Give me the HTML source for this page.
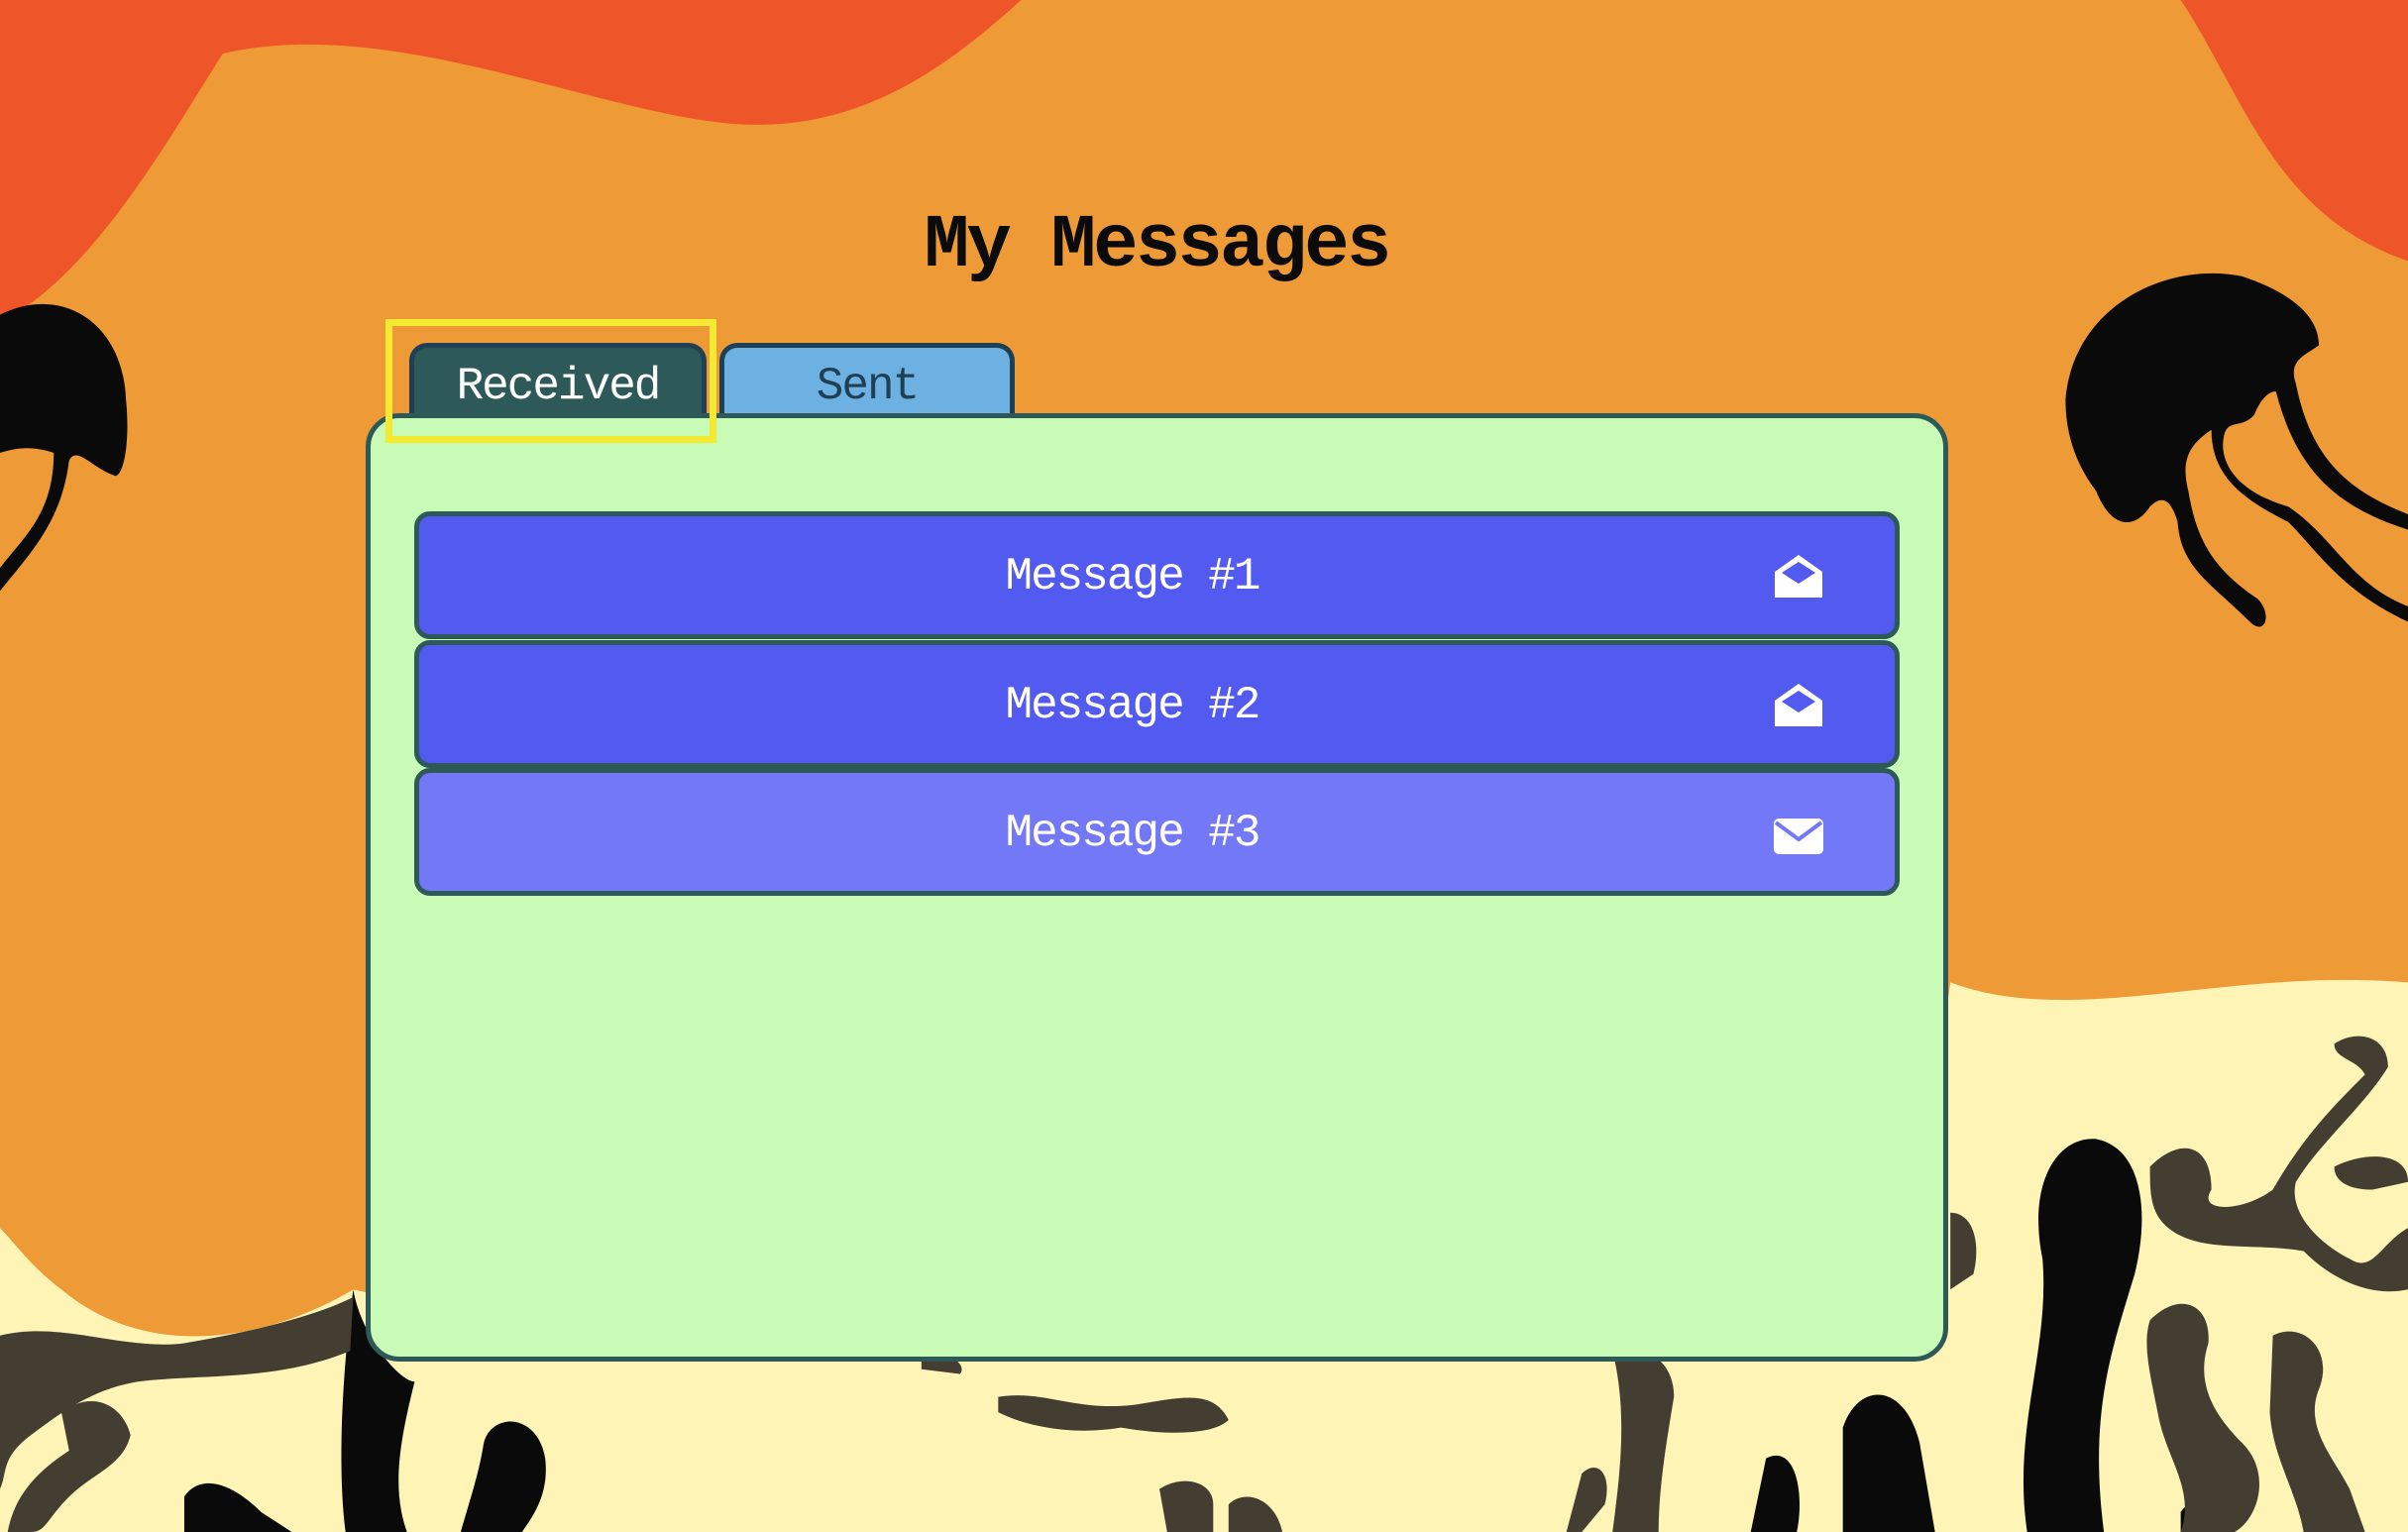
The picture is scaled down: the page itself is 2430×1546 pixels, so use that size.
<!DOCTYPE html>
<html><head><meta charset="utf-8"><style>
html,body{margin:0;padding:0;width:2430px;height:1546px;overflow:hidden;position:relative;font-family:"Liberation Mono","DejaVu Sans Mono",monospace;}
svg.bg{position:absolute;left:0;top:0;width:2430px;height:1546px;}
.title{position:absolute;left:0;width:2334px;top:205px;text-align:center;font-size:76px;font-weight:bold;color:#0b0b0b;letter-spacing:-3px;}
.tab{position:absolute;top:346px;height:80px;border:5px solid #1f3f55;border-bottom:none;border-radius:18px 18px 0 0;box-sizing:border-box;text-align:center;font-size:46px;line-height:78px;letter-spacing:-2px;}
.panel{position:absolute;left:369px;top:417px;width:1597px;height:957px;background:#c8fbb5;border:5px solid #2d5a58;border-radius:34px;box-sizing:border-box;}
.hl{position:absolute;left:389px;top:322px;width:334px;height:125px;border:7px solid #f5ea32;box-sizing:border-box;}
.msg{position:absolute;left:418px;width:1499px;height:129px;border:5px solid #2d5a58;border-radius:16px;box-sizing:border-box;color:#fff;font-size:46px;text-align:center;line-height:122px;letter-spacing:-2px;padding-right:50px;}
.msg svg{position:absolute;right:70px;top:36px;}
</style></head><body>
<svg class="bg" viewBox="0 0 1568 998" preserveAspectRatio="none">
<rect width="1568" height="998" fill="#ee5529"/>
<rect y="600" width="1568" height="398" fill="#fef4b6"/>
<path d="M145,35 C250,10 380,70 470,80 C560,90 620,40 665,0 L1420,0 C1460,60 1480,140 1568,170 L1568,640 C1450,630 1350,670 1270,640 L1240,860 C1100,880 400,880 230,840 C180,870 100,890 40,840 C20,825 10,810 0,800 L0,210 C60,180 110,90 145,35 Z" fill="#ed9a37"/>
<g fill="#0a0a0a">
<path d="M0,205 C40,185 80,210 82,260 C85,290 80,310 75,310 C60,305 50,290 45,300 C40,340 20,360 0,385 L0,370 C15,350 35,335 35,295 C20,290 10,292 0,295 Z"/>
<path d="M1345,260 C1350,200 1410,170 1460,180 C1490,190 1510,205 1510,225 C1500,232 1490,235 1495,250 C1505,300 1530,320 1568,335 L1568,345 C1520,330 1495,305 1482,255 C1475,255 1470,265 1468,270 C1460,280 1450,272 1448,285 C1445,300 1455,320 1490,330 C1520,350 1530,380 1568,395 L1568,405 C1525,385 1510,360 1490,340 C1460,325 1440,310 1440,280 C1425,290 1420,300 1425,320 C1430,350 1440,370 1470,390 C1480,400 1475,415 1465,405 C1440,380 1420,370 1418,340 C1415,330 1410,320 1400,330 C1390,345 1375,345 1365,320 C1350,300 1345,280 1345,260 Z"/>
<path d="M1330,820 C1320,770 1340,740 1365,742 C1395,748 1400,790 1390,830 C1375,880 1360,920 1370,998 L1320,998 C1310,930 1335,880 1330,820 Z"/>
<path d="M1200,930 C1210,900 1240,900 1250,940 L1260,998 L1200,998 Z"/>
<path d="M230,840 C235,870 260,900 270,900 C260,940 255,970 265,998 L225,998 C220,960 222,900 230,840 Z"/>
<path d="M315,940 C320,920 350,920 355,950 C358,975 345,990 340,998 L300,998 C305,980 312,960 315,940 Z"/>
<path d="M120,975 C130,960 150,965 170,985 L190,998 L120,998 Z"/>
<path d="M1420,985 C1430,970 1450,978 1445,998 L1420,998 Z"/>
<path d="M1150,950 C1170,940 1175,975 1170,998 L1140,998 Z"/>
</g>
<g fill="#433e31">
<path d="M0,870 C40,860 80,880 120,875 C150,870 200,860 230,845 L228,880 C180,900 130,895 90,900 C60,905 40,920 20,935 C0,950 5,960 0,970 Z"/>
<path d="M40,920 C60,905 80,915 85,935 C80,955 60,960 45,975 C30,990 30,998 20,998 L5,998 C10,970 30,955 45,945 Z"/>
<path d="M1400,760 C1420,740 1440,745 1440,775 C1430,790 1460,790 1480,775 C1500,740 1520,720 1540,700 C1535,690 1520,690 1520,680 C1535,670 1555,675 1555,695 C1540,720 1510,745 1495,770 C1490,790 1510,810 1530,820 C1545,830 1550,810 1568,800 L1568,840 C1545,845 1520,835 1500,815 C1470,810 1440,815 1420,805 C1400,795 1400,780 1400,760 Z"/>
<path d="M1520,760 C1540,750 1568,750 1568,770 L1545,775 C1530,775 1520,770 1520,760 Z"/>
<path d="M1400,860 C1420,840 1440,850 1438,875 C1430,900 1440,920 1460,940 C1480,960 1470,990 1455,998 L1420,998 C1430,970 1410,950 1405,920 C1400,895 1395,875 1400,860 Z"/>
<path d="M1480,870 C1500,860 1520,880 1510,905 C1500,930 1520,950 1530,970 L1540,998 L1500,998 C1495,970 1480,950 1478,920 Z"/>
<path d="M1050,880 C1070,875 1090,885 1090,910 C1085,940 1080,970 1080,998 L1050,998 C1055,960 1060,920 1050,880 Z"/>
<path d="M1270,790 C1285,790 1290,810 1285,830 L1270,840 Z"/>
<path d="M1030,960 C1040,950 1050,960 1045,980 L1030,998 L1020,998 Z"/>
<path d="M650,910 C680,905 700,920 740,915 C770,910 790,905 800,925 C790,935 760,935 730,930 C700,935 670,930 650,920 Z"/>
<path d="M755,970 C770,960 790,965 790,980 L790,998 L760,998 Z"/>
<path d="M800,980 C810,970 830,975 835,998 L800,998 Z"/>
<path d="M600,880 C620,880 630,890 625,895 L600,892 Z"/>
</g>
</svg>
<div class="title">My Messages</div>
<div class="tab" style="left:413px;width:300px;background:#2d5a58;color:#fff;">Received</div>
<div class="tab" style="left:726px;width:298px;background:#6db1e2;color:#1f3f55;">Sent</div>
<div class="panel"></div>
<div class="hl"></div>
<div class="msg" style="top:516px;background:#525af0;">Message #1
<svg width="54" height="50" viewBox="0 0 54 50"><path d="M3,20 L27,3 L51,20 L51,46 L3,46 Z" fill="#fff"/><path d="M10,21 L27,10 L44,21 L27,32 Z" fill="#525af0"/></svg></div>
<div class="msg" style="top:646px;background:#525af0;">Message #2
<svg width="54" height="50" viewBox="0 0 54 50"><path d="M3,20 L27,3 L51,20 L51,46 L3,46 Z" fill="#fff"/><path d="M10,21 L27,10 L44,21 L27,32 Z" fill="#525af0"/></svg></div>
<div class="msg" style="top:775px;background:#7378f6;">Message #3
<svg width="54" height="50" viewBox="0 0 54 50" style="top:40px"><rect x="2" y="6" width="50" height="36" rx="5" fill="#fff"/><path d="M4,10 L27,27 L50,10" fill="none" stroke="#7378f6" stroke-width="4"/></svg></div>
</body></html>
